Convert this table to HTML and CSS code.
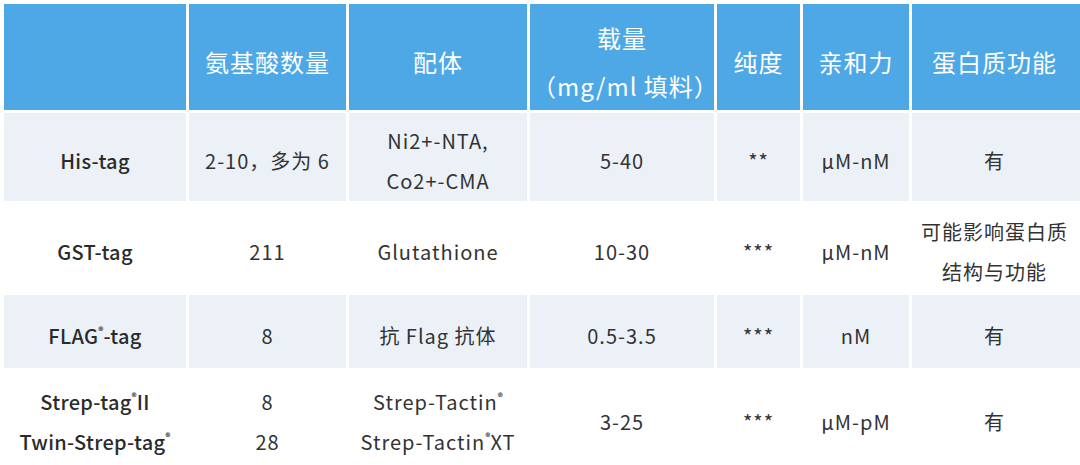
FILE: index.html
```html
<!DOCTYPE html>
<html lang="zh-CN">
<head>
<meta charset="utf-8">
<title>标签对比</title>
<link rel="stylesheet" href="styles.css">
</head>
<body>
<div class="wrap">
<table class="tags">
  <colgroup>
    <col class="c1"><col class="c2"><col class="c3"><col class="c4"><col class="c5"><col class="c6"><col class="c7">
  </colgroup>
  <thead>
    <tr class="head">
      <th></th>
      <th>氨基酸数量</th>
      <th>配体</th>
      <th>载量<br>（mg/ml 填料）</th>
      <th>纯度</th>
      <th>亲和力</th>
      <th class="last">蛋白质功能</th>
    </tr>
  </thead>
  <tbody>
    <tr class="r1 band">
      <td class="name">His-tag</td>
      <td>2-10，多为 6</td>
      <td>Ni2+-NTA,<br>Co2+-CMA</td>
      <td>5-40</td>
      <td class="star">**</td>
      <td>µM-nM</td>
      <td class="last">有</td>
    </tr>
    <tr class="r2">
      <td class="name">GST-tag</td>
      <td>211</td>
      <td>Glutathione</td>
      <td>10-30</td>
      <td class="star">***</td>
      <td>µM-nM</td>
      <td class="last">可能影响蛋白质<br>结构与功能</td>
    </tr>
    <tr class="r3 band">
      <td class="name">FLAG<span class="reg">®</span>-tag</td>
      <td>8</td>
      <td>抗 Flag 抗体</td>
      <td>0.5-3.5</td>
      <td class="star">***</td>
      <td>nM</td>
      <td class="last">有</td>
    </tr>
    <tr class="r4">
      <td class="name">Strep-tag<span class="reg">®</span>II<br>Twin-Strep-tag<span class="reg">®</span></td>
      <td>8<br>28</td>
      <td>Strep-Tactin<span class="reg">®</span><br>Strep-Tactin<span class="reg">®</span>XT</td>
      <td>3-25</td>
      <td class="star">***</td>
      <td>µM-pM</td>
      <td class="last">有</td>
    </tr>
  </tbody>
</table>
</div>
</body>
</html>
```
FILE: styles.css
```css
html, body {
  margin: 0;
  padding: 0;
  background: #ffffff;
  overflow: hidden;
}

.wrap {
  width: 1100px;
  padding: 1px 0 0 1px;
}

.tags {
  border-collapse: separate;
  border-spacing: 3px;
  table-layout: fixed;
  width: 1087px;
  font-family: "Noto Sans CJK SC", "Noto Sans", sans-serif;
  color: #333333;
  letter-spacing: 1px;
}

.c1 { width: 182px; }
.c2 { width: 157px; }
.c3 { width: 178px; }
.c4 { width: 184px; }
.c5 { width: 83px; }
.c6 { width: 106px; }
.c7 { width: 175px; }

.tags th,
.tags td {
  text-align: center;
  vertical-align: middle;
  padding: 0 2px;
  white-space: nowrap;
}

.tags .last {
  padding-right: 12px;
}

.head th {
  background: #4ea8e5;
  color: #ffffff;
  font-size: 24px;
  font-weight: 400;
  line-height: 48px;
  height: 96px;
  padding-top: 10px;
  padding-bottom: 0;
}

.tags td {
  font-size: 20px;
  line-height: 40px;
  padding-top: 8px;
  padding-bottom: 0;
}

.band td {
  background: #ecf1f8;
}

.r1 td { height: 80px; }
.r2 td { height: 77px; }
.r3 td { height: 65px; }
.r4 td { height: 85px; }

.tags td.name {
  font-weight: 500;
  color: #2b2b2b;
  letter-spacing: 0.3px;
}

.reg {
  font-size: 10px;
  vertical-align: 9px;
  line-height: 0;
  letter-spacing: 0;
  font-weight: 700;
}

.star {
  letter-spacing: 1px;
}
```
